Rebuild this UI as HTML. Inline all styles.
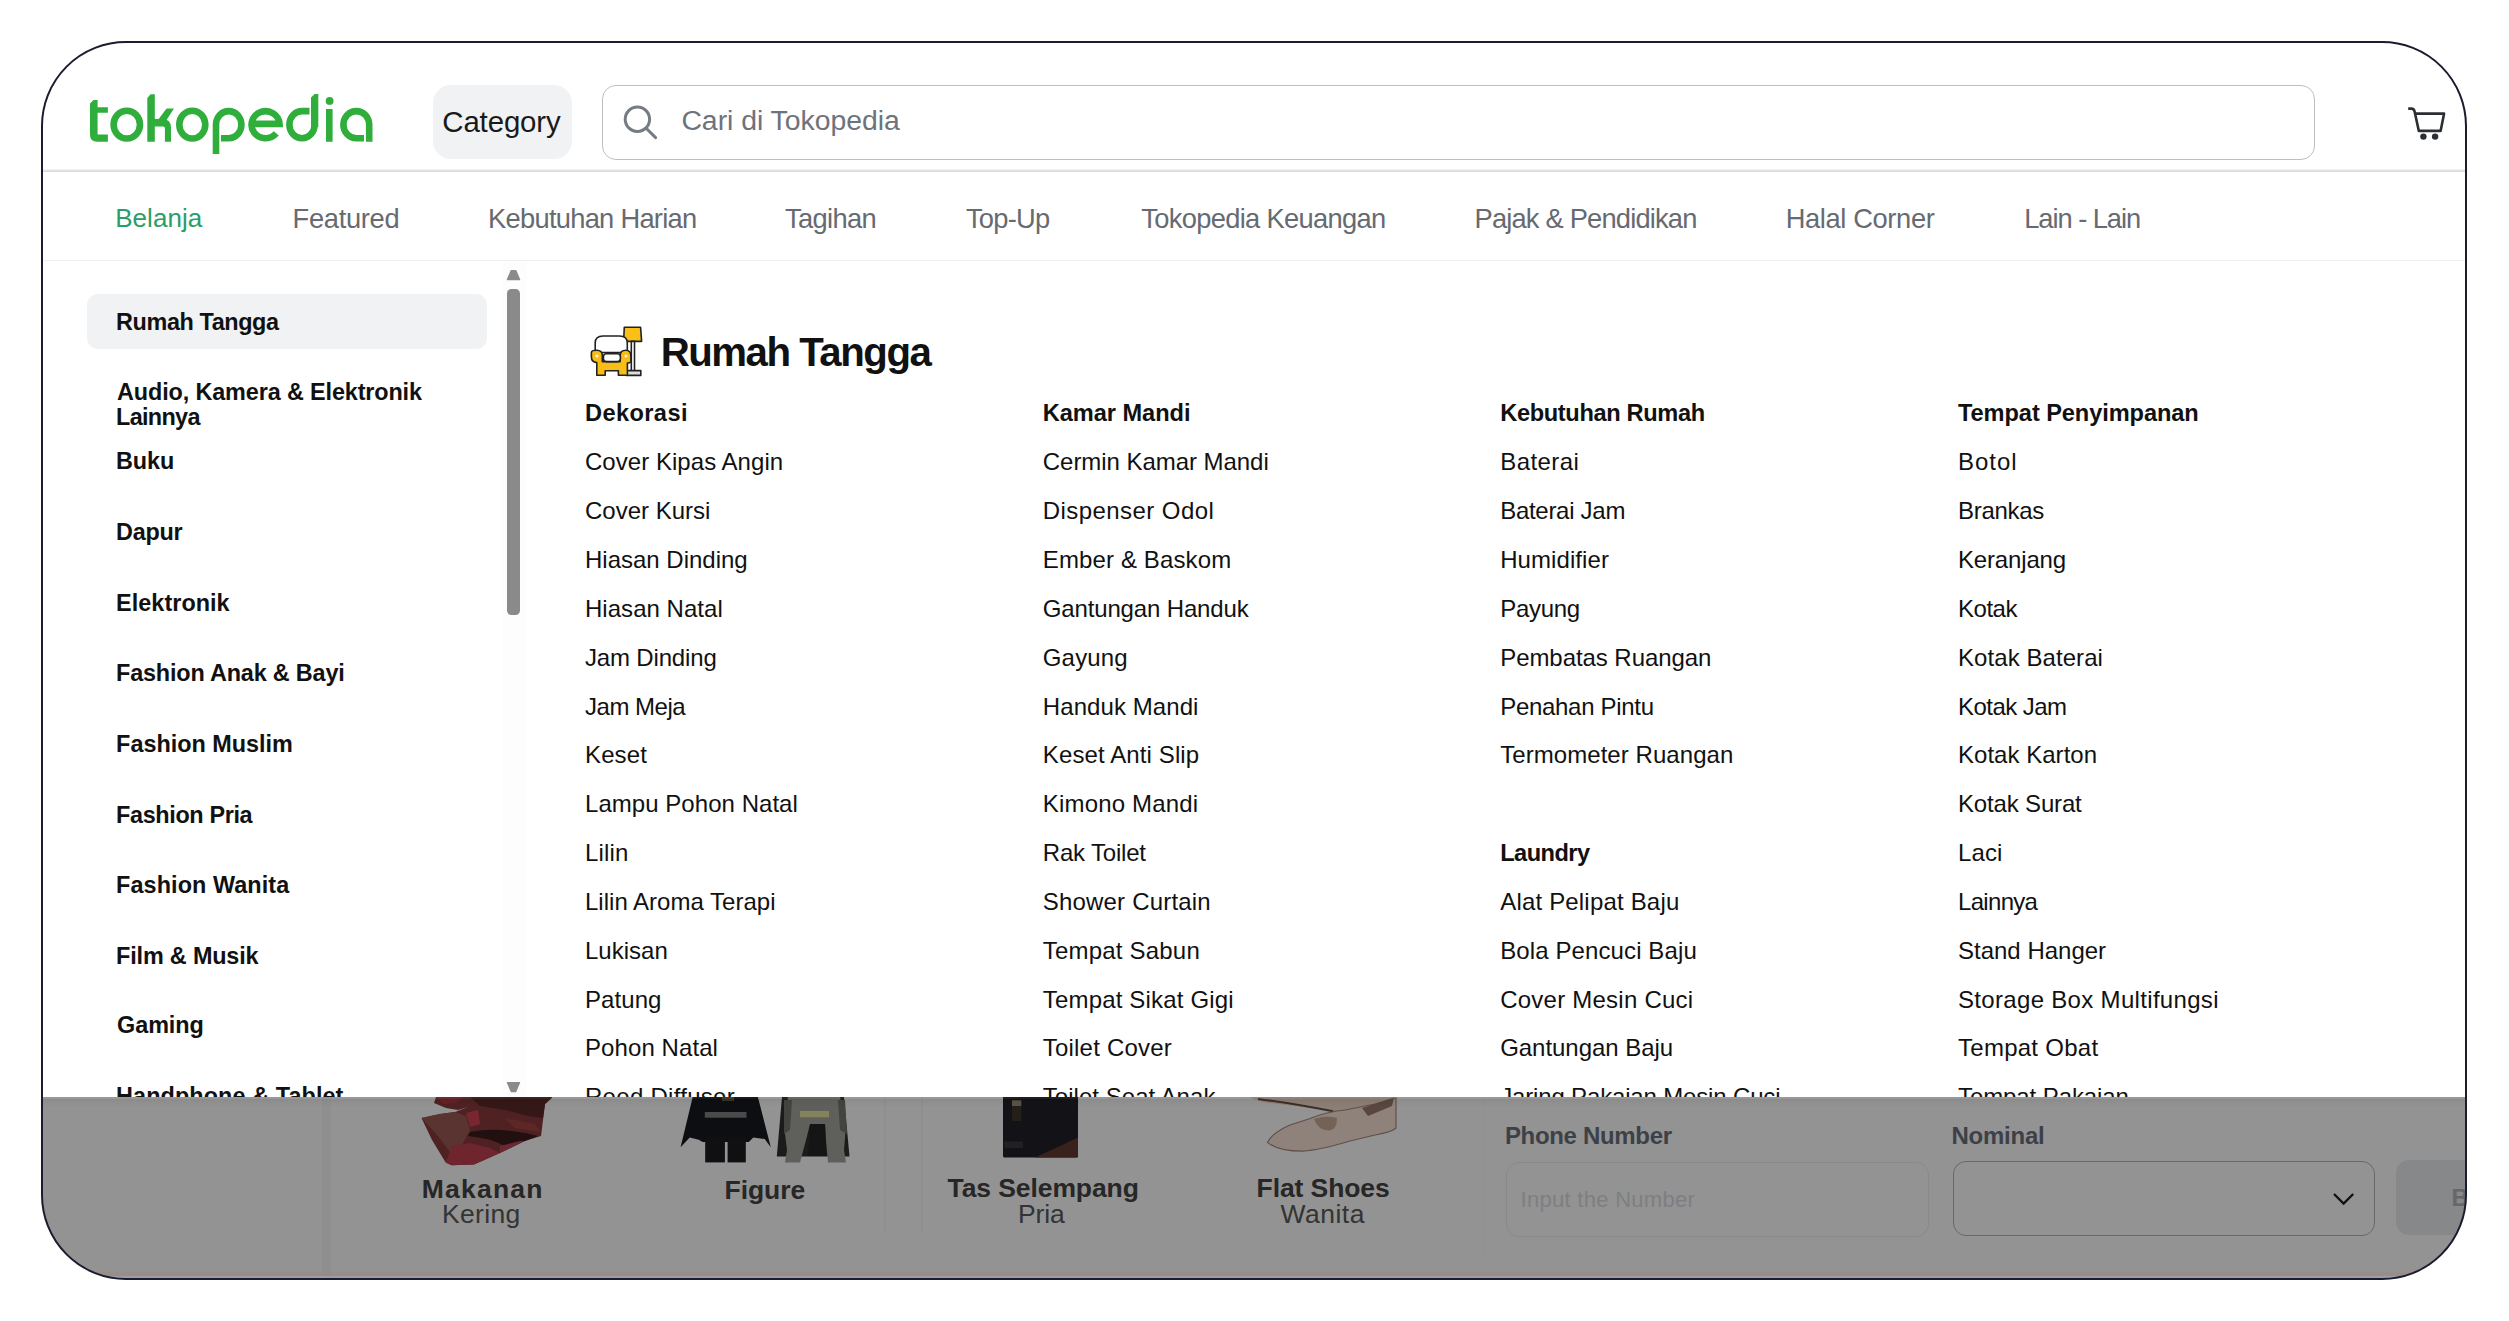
<!DOCTYPE html>
<html><head><meta charset="utf-8"><style>
html,body{margin:0;padding:0;background:#fff;}
body{width:2509px;height:1321px;overflow:hidden;position:relative;font-family:"Liberation Sans",sans-serif;}
.abs{position:absolute;}
.t{position:absolute;white-space:nowrap;font-family:"Liberation Sans",sans-serif;}
#clip{position:absolute;left:0;top:0;width:2509px;height:1321px;clip-path:inset(42px 43.5px 42.5px 42px round 83px);background:#fff;}
#frame{position:absolute;left:40.5px;top:40.5px;width:2426.5px;height:1239.5px;box-sizing:border-box;border:2.5px solid #1b1c2d;border-radius:85px;}
</style></head><body>
<div id="clip">
<svg class="abs" style="left:0;top:0" width="400" height="170" viewBox="0 0 400 170">
<g fill="#2fae3c">
<path d="M90,103.4 L93.6,100.1 H97.6 V107.2 H107.9 V112.7 H97.6 V134.6 H107.9 V141.7 H97.2 Q90,141.7 90,134.4 Z"/>
<path d="M147.3,97.9 L150.6,94.2 H154.8 V141.7 H147.3 Z"/>
<path d="M154,119.1 H163 Q171,119.6 171,127.5 V141.7 H164.9 V128.2 Q164.9,126.6 163.3,126.6 H154 Z"/>
<path d="M158.3,119.6 L166.6,108.6 H174 L165.4,121.8 Z"/>
<path d="M311,97.6 L314.6,94.1 H318.3 V127 H311 Z"/>
<circle cx="329.6" cy="100.9" r="3.9"/>
</g>
<g fill="none" stroke="#2fae3c" stroke-width="6.6" stroke-linecap="butt">
<ellipse cx="126.8" cy="124.6" rx="13.2" ry="13.9"/>
<ellipse cx="192.3" cy="124.6" rx="13.0" ry="13.9"/>
<path d="M216,154 V124.7 A12.7,13.6 0 1 1 228.8,138.3 H221"/>
<path d="M251.4,123.9 H279.55 A14.0,13.5 0 1 0 276.3,133.4"/>
<path d="M314.6,124.7 A12.6,13.6 0 1 1 302.1,111.1 H309.5"/>
<path d="M329.3,109 V141.7"/>
<path d="M364,138.3 H356.3 A12.9,13.6 0 1 1 369.2,124.7 V141.7"/>
</g>
</svg><div class="abs" style="left:433px;top:84.6px;width:138.5px;height:74px;border-radius:18px;background:#f0f2f4"></div><div class="t" style="left:442.30px;top:106.39px;font-size:29.4px;line-height:32.840px;font-weight:400;color:#1a1a1a;letter-spacing:-0.123px;">Category</div><div class="abs" style="left:601.5px;top:85px;width:1713px;height:74.5px;box-sizing:border-box;border:1.8px solid #bdbebf;border-radius:14px;background:#fff"></div><svg class="abs" style="left:615px;top:98px" width="50" height="50" viewBox="615 98 50 50">
<circle cx="637.4" cy="119.3" r="12.2" fill="none" stroke="#777b83" stroke-width="3"/>
<path d="M646.2,128.2 L655.6,137.6" stroke="#777b83" stroke-width="3" stroke-linecap="round"/>
</svg><div class="t" style="left:681.40px;top:104.60px;font-size:28.4px;line-height:31.723px;font-weight:400;color:#6e737b;letter-spacing:-0.023px;">Cari di Tokopedia</div><svg class="abs" style="left:2400px;top:100px" width="60" height="50" viewBox="2400 100 60 50">
<path d="M2408.2,108.6 H2411.5 Q2414,108.6 2414.6,111.5 L2418.8,130.9 H2440.6 L2444.1,113.6 H2415" fill="none" stroke="#2b2f34" stroke-width="2.6" stroke-linejoin="round"/>
<circle cx="2423.4" cy="136.6" r="3.2" fill="#2b2f34"/>
<circle cx="2435.1" cy="136.6" r="3.2" fill="#2b2f34"/>
</svg><div class="abs" style="left:0;top:169px;width:2509px;height:3px;background:linear-gradient(#f4f4f5,#d3d4d5)"></div><div class="t" style="left:115.20px;top:203.87px;font-size:26.0px;line-height:29.042px;font-weight:400;color:#2a9e68;letter-spacing:0.038px;">Belanja</div><div class="t" style="left:292.50px;top:204.19px;font-size:27.3px;line-height:30.494px;font-weight:400;color:#666a71;letter-spacing:-0.296px;">Featured</div><div class="t" style="left:488.10px;top:204.19px;font-size:27.3px;line-height:30.494px;font-weight:400;color:#666a71;letter-spacing:-0.732px;">Kebutuhan Harian</div><div class="t" style="left:785.10px;top:204.19px;font-size:27.3px;line-height:30.494px;font-weight:400;color:#666a71;letter-spacing:-0.673px;">Tagihan</div><div class="t" style="left:965.90px;top:204.19px;font-size:27.3px;line-height:30.494px;font-weight:400;color:#666a71;letter-spacing:-0.743px;">Top-Up</div><div class="t" style="left:1141.30px;top:204.19px;font-size:27.3px;line-height:30.494px;font-weight:400;color:#666a71;letter-spacing:-0.690px;">Tokopedia Keuangan</div><div class="t" style="left:1474.50px;top:204.19px;font-size:27.3px;line-height:30.494px;font-weight:400;color:#666a71;letter-spacing:-0.815px;">Pajak &amp; Pendidikan</div><div class="t" style="left:1785.70px;top:204.19px;font-size:27.3px;line-height:30.494px;font-weight:400;color:#666a71;letter-spacing:-0.376px;">Halal Corner</div><div class="t" style="left:2024.20px;top:204.19px;font-size:27.3px;line-height:30.494px;font-weight:400;color:#666a71;letter-spacing:-1.049px;">Lain - Lain</div><div class="abs" style="left:0;top:259.8px;width:2509px;height:1.6px;background:#eeeff0"></div><div class="abs" style="left:86.7px;top:294.2px;width:400.1px;height:54.4px;border-radius:11px;background:#f0f2f3"></div><div class="t" style="left:116.10px;top:308.82px;font-size:23.4px;line-height:26.138px;font-weight:700;color:#111;letter-spacing:-0.391px;">Rumah Tangga</div><div class="t" style="left:117.10px;top:378.52px;font-size:23.4px;line-height:26.138px;font-weight:700;color:#111;letter-spacing:-0.126px;">Audio, Kamera &amp; Elektronik</div><div class="t" style="left:116.10px;top:404.42px;font-size:23.4px;line-height:26.138px;font-weight:700;color:#111;letter-spacing:-0.680px;">Lainnya</div><div class="t" style="left:116.10px;top:447.82px;font-size:23.4px;line-height:26.138px;font-weight:700;color:#111;letter-spacing:-0.130px;">Buku</div><div class="t" style="left:116.10px;top:519.02px;font-size:23.4px;line-height:26.138px;font-weight:700;color:#111;letter-spacing:-0.294px;">Dapur</div><div class="t" style="left:116.10px;top:589.62px;font-size:23.4px;line-height:26.138px;font-weight:700;color:#111;letter-spacing:0.046px;">Elektronik</div><div class="t" style="left:116.10px;top:660.42px;font-size:23.4px;line-height:26.138px;font-weight:700;color:#111;letter-spacing:-0.176px;">Fashion Anak &amp; Bayi</div><div class="t" style="left:116.10px;top:730.72px;font-size:23.4px;line-height:26.138px;font-weight:700;color:#111;letter-spacing:-0.003px;">Fashion Muslim</div><div class="t" style="left:116.10px;top:801.52px;font-size:23.4px;line-height:26.138px;font-weight:700;color:#111;letter-spacing:-0.352px;">Fashion Pria</div><div class="t" style="left:116.10px;top:872.42px;font-size:23.4px;line-height:26.138px;font-weight:700;color:#111;letter-spacing:0.088px;">Fashion Wanita</div><div class="t" style="left:116.10px;top:942.72px;font-size:23.4px;line-height:26.138px;font-weight:700;color:#111;letter-spacing:-0.168px;">Film &amp; Musik</div><div class="t" style="left:117.10px;top:1012.32px;font-size:23.4px;line-height:26.138px;font-weight:700;color:#111;letter-spacing:-0.077px;">Gaming</div><div class="t" style="left:116.10px;top:1082.62px;font-size:23.4px;line-height:26.138px;font-weight:700;color:#111;letter-spacing:0.095px;">Handphone &amp; Tablet</div><div class="abs" style="left:503px;top:262px;width:24px;height:835px;background:#fdfdfd"></div><svg class="abs" style="left:500px;top:262px" width="30" height="840" viewBox="500 262 30 840"><path d="M511.2,270.6 H515.8 L519.6,279.6 H507.4 Z" fill="#8a8a8a" stroke="#8a8a8a" stroke-width="1.2" stroke-linejoin="round"/><path d="M507.4,1082.6 H519.6 L515.8,1091.6 H511.2 Z" fill="#8a8a8a" stroke="#8a8a8a" stroke-width="1.2" stroke-linejoin="round"/></svg><div class="abs" style="left:507px;top:289px;width:13px;height:325.6px;border-radius:4.5px;background:#8a8a8a"></div><svg class="abs" style="left:585px;top:322px" width="60" height="58" viewBox="585 322 60 58">
<g stroke="#222" stroke-width="1.6" stroke-linejoin="round">
<path d="M624.3,327.3 H640.6 L641.6,341.4 H623.6 Z" fill="#fbbf16"/>
<rect x="631.3" y="341.4" width="3.2" height="29.6" fill="#fff"/>
<rect x="626.2" y="370.6" width="14.6" height="4.8" fill="#ddd"/>
<path d="M595.2,352.5 V343 Q595.2,336 603,336 H619.5 Q627.3,336 627.3,343 V352.5 Z" fill="#fff"/>
<path d="M591.4,352.5 Q591.4,350.3 596.8,350.3 Q602.3,350.3 602.3,355.5 V361.6 H620.2 V355.5 Q620.2,350.3 625.8,350.3 Q630.9,350.3 630.9,356 V362 Q629.7,363 627.4,363 V375.3 H618.4 V370.7 H605.2 V375.3 H596.8 V362.6 Q591.4,362 591.4,357 Z" fill="#f9bd18"/>
<rect x="603.4" y="353.8" width="17" height="7.8" rx="3" fill="#fff"/>
</g>
<circle cx="597" cy="356" r="1.6" fill="#fff6c0"/><circle cx="626" cy="356" r="1.6" fill="#fff6c0"/>
</svg><div class="t" style="left:660.70px;top:330.62px;font-size:40.2px;line-height:44.903px;font-weight:700;color:#111;letter-spacing:-1.466px;">Rumah Tangga</div><div class="t" style="left:585.00px;top:399.64px;font-size:23.6px;line-height:26.361px;font-weight:700;color:#111;letter-spacing:0.397px;">Dekorasi</div><div class="t" style="left:585.00px;top:449.28px;font-size:24.0px;line-height:26.808px;font-weight:400;color:#111;letter-spacing:0.042px;">Cover Kipas Angin</div><div class="t" style="left:585.00px;top:498.13px;font-size:24.0px;line-height:26.808px;font-weight:400;color:#111;letter-spacing:-0.004px;">Cover Kursi</div><div class="t" style="left:585.00px;top:546.98px;font-size:24.0px;line-height:26.808px;font-weight:400;color:#111;letter-spacing:-0.009px;">Hiasan Dinding</div><div class="t" style="left:585.00px;top:595.83px;font-size:24.0px;line-height:26.808px;font-weight:400;color:#111;letter-spacing:0.030px;">Hiasan Natal</div><div class="t" style="left:585.00px;top:644.68px;font-size:24.0px;line-height:26.808px;font-weight:400;color:#111;letter-spacing:-0.165px;">Jam Dinding</div><div class="t" style="left:585.00px;top:693.53px;font-size:24.0px;line-height:26.808px;font-weight:400;color:#111;letter-spacing:-0.483px;">Jam Meja</div><div class="t" style="left:585.00px;top:742.38px;font-size:24.0px;line-height:26.808px;font-weight:400;color:#111;letter-spacing:0.124px;">Keset</div><div class="t" style="left:585.00px;top:791.23px;font-size:24.0px;line-height:26.808px;font-weight:400;color:#111;letter-spacing:0.043px;">Lampu Pohon Natal</div><div class="t" style="left:585.00px;top:840.08px;font-size:24.0px;line-height:26.808px;font-weight:400;color:#111;letter-spacing:0.139px;">Lilin</div><div class="t" style="left:585.00px;top:888.93px;font-size:24.0px;line-height:26.808px;font-weight:400;color:#111;letter-spacing:0.009px;">Lilin Aroma Terapi</div><div class="t" style="left:585.00px;top:937.78px;font-size:24.0px;line-height:26.808px;font-weight:400;color:#111;letter-spacing:0.004px;">Lukisan</div><div class="t" style="left:585.00px;top:986.63px;font-size:24.0px;line-height:26.808px;font-weight:400;color:#111;letter-spacing:0.076px;">Patung</div><div class="t" style="left:585.00px;top:1035.48px;font-size:24.0px;line-height:26.808px;font-weight:400;color:#111;letter-spacing:0.084px;">Pohon Natal</div><div class="t" style="left:585.00px;top:1084.33px;font-size:24.0px;line-height:26.808px;font-weight:400;color:#111;letter-spacing:0.283px;">Reed Diffuser</div><div class="t" style="left:1042.80px;top:399.64px;font-size:23.6px;line-height:26.361px;font-weight:700;color:#111;letter-spacing:-0.050px;">Kamar Mandi</div><div class="t" style="left:1042.80px;top:449.28px;font-size:24.0px;line-height:26.808px;font-weight:400;color:#111;letter-spacing:-0.047px;">Cermin Kamar Mandi</div><div class="t" style="left:1042.80px;top:498.13px;font-size:24.0px;line-height:26.808px;font-weight:400;color:#111;letter-spacing:0.432px;">Dispenser Odol</div><div class="t" style="left:1042.80px;top:546.98px;font-size:24.0px;line-height:26.808px;font-weight:400;color:#111;letter-spacing:0.128px;">Ember &amp; Baskom</div><div class="t" style="left:1042.80px;top:595.83px;font-size:24.0px;line-height:26.808px;font-weight:400;color:#111;letter-spacing:-0.151px;">Gantungan Handuk</div><div class="t" style="left:1042.80px;top:644.68px;font-size:24.0px;line-height:26.808px;font-weight:400;color:#111;letter-spacing:0.158px;">Gayung</div><div class="t" style="left:1042.80px;top:693.53px;font-size:24.0px;line-height:26.808px;font-weight:400;color:#111;letter-spacing:0.079px;">Handuk Mandi</div><div class="t" style="left:1042.80px;top:742.38px;font-size:24.0px;line-height:26.808px;font-weight:400;color:#111;letter-spacing:0.112px;">Keset Anti Slip</div><div class="t" style="left:1042.80px;top:791.23px;font-size:24.0px;line-height:26.808px;font-weight:400;color:#111;letter-spacing:0.166px;">Kimono Mandi</div><div class="t" style="left:1042.80px;top:840.08px;font-size:24.0px;line-height:26.808px;font-weight:400;color:#111;letter-spacing:-0.190px;">Rak Toilet</div><div class="t" style="left:1042.80px;top:888.93px;font-size:24.0px;line-height:26.808px;font-weight:400;color:#111;letter-spacing:0.188px;">Shower Curtain</div><div class="t" style="left:1042.80px;top:937.78px;font-size:24.0px;line-height:26.808px;font-weight:400;color:#111;letter-spacing:0.198px;">Tempat Sabun</div><div class="t" style="left:1042.80px;top:986.63px;font-size:24.0px;line-height:26.808px;font-weight:400;color:#111;letter-spacing:0.172px;">Tempat Sikat Gigi</div><div class="t" style="left:1042.80px;top:1035.48px;font-size:24.0px;line-height:26.808px;font-weight:400;color:#111;letter-spacing:0.198px;">Toilet Cover</div><div class="t" style="left:1042.80px;top:1084.33px;font-size:24.0px;line-height:26.808px;font-weight:400;color:#111;letter-spacing:0.031px;">Toilet Seat Anak</div><div class="t" style="left:1500.20px;top:399.64px;font-size:23.6px;line-height:26.361px;font-weight:700;color:#111;letter-spacing:-0.336px;">Kebutuhan Rumah</div><div class="t" style="left:1500.20px;top:449.28px;font-size:24.0px;line-height:26.808px;font-weight:400;color:#111;letter-spacing:0.432px;">Baterai</div><div class="t" style="left:1500.20px;top:498.13px;font-size:24.0px;line-height:26.808px;font-weight:400;color:#111;letter-spacing:-0.286px;">Baterai Jam</div><div class="t" style="left:1500.20px;top:546.98px;font-size:24.0px;line-height:26.808px;font-weight:400;color:#111;letter-spacing:0.074px;">Humidifier</div><div class="t" style="left:1500.20px;top:595.83px;font-size:24.0px;line-height:26.808px;font-weight:400;color:#111;letter-spacing:-0.290px;">Payung</div><div class="t" style="left:1500.20px;top:644.68px;font-size:24.0px;line-height:26.808px;font-weight:400;color:#111;letter-spacing:-0.060px;">Pembatas Ruangan</div><div class="t" style="left:1500.20px;top:693.53px;font-size:24.0px;line-height:26.808px;font-weight:400;color:#111;letter-spacing:-0.301px;">Penahan Pintu</div><div class="t" style="left:1500.20px;top:742.38px;font-size:24.0px;line-height:26.808px;font-weight:400;color:#111;letter-spacing:0.061px;">Termometer Ruangan</div><div class="t" style="left:1500.20px;top:840.44px;font-size:23.6px;line-height:26.361px;font-weight:700;color:#111;letter-spacing:-0.542px;">Laundry</div><div class="t" style="left:1500.20px;top:888.93px;font-size:24.0px;line-height:26.808px;font-weight:400;color:#111;letter-spacing:0.184px;">Alat Pelipat Baju</div><div class="t" style="left:1500.20px;top:937.78px;font-size:24.0px;line-height:26.808px;font-weight:400;color:#111;letter-spacing:0.110px;">Bola Pencuci Baju</div><div class="t" style="left:1500.20px;top:986.63px;font-size:24.0px;line-height:26.808px;font-weight:400;color:#111;letter-spacing:0.236px;">Cover Mesin Cuci</div><div class="t" style="left:1500.20px;top:1035.48px;font-size:24.0px;line-height:26.808px;font-weight:400;color:#111;letter-spacing:-0.040px;">Gantungan Baju</div><div class="t" style="left:1500.20px;top:1084.33px;font-size:24.0px;line-height:26.808px;font-weight:400;color:#111;letter-spacing:-0.158px;">Jaring Pakaian Mesin Cuci</div><div class="t" style="left:1958.00px;top:399.64px;font-size:23.6px;line-height:26.361px;font-weight:700;color:#111;letter-spacing:-0.082px;">Tempat Penyimpanan</div><div class="t" style="left:1958.00px;top:449.28px;font-size:24.0px;line-height:26.808px;font-weight:400;color:#111;letter-spacing:0.957px;">Botol</div><div class="t" style="left:1958.00px;top:498.13px;font-size:24.0px;line-height:26.808px;font-weight:400;color:#111;letter-spacing:-0.307px;">Brankas</div><div class="t" style="left:1958.00px;top:546.98px;font-size:24.0px;line-height:26.808px;font-weight:400;color:#111;letter-spacing:-0.159px;">Keranjang</div><div class="t" style="left:1958.00px;top:595.83px;font-size:24.0px;line-height:26.808px;font-weight:400;color:#111;letter-spacing:-0.468px;">Kotak</div><div class="t" style="left:1958.00px;top:644.68px;font-size:24.0px;line-height:26.808px;font-weight:400;color:#111;letter-spacing:0.071px;">Kotak Baterai</div><div class="t" style="left:1958.00px;top:693.53px;font-size:24.0px;line-height:26.808px;font-weight:400;color:#111;letter-spacing:-0.536px;">Kotak Jam</div><div class="t" style="left:1958.00px;top:742.38px;font-size:24.0px;line-height:26.808px;font-weight:400;color:#111;letter-spacing:0.027px;">Kotak Karton</div><div class="t" style="left:1958.00px;top:791.23px;font-size:24.0px;line-height:26.808px;font-weight:400;color:#111;letter-spacing:-0.163px;">Kotak Surat</div><div class="t" style="left:1958.00px;top:840.08px;font-size:24.0px;line-height:26.808px;font-weight:400;color:#111;letter-spacing:0.135px;">Laci</div><div class="t" style="left:1958.00px;top:888.93px;font-size:24.0px;line-height:26.808px;font-weight:400;color:#111;letter-spacing:-0.687px;">Lainnya</div><div class="t" style="left:1958.00px;top:937.78px;font-size:24.0px;line-height:26.808px;font-weight:400;color:#111;letter-spacing:-0.001px;">Stand Hanger</div><div class="t" style="left:1958.00px;top:986.63px;font-size:24.0px;line-height:26.808px;font-weight:400;color:#111;letter-spacing:0.321px;">Storage Box Multifungsi</div><div class="t" style="left:1958.00px;top:1035.48px;font-size:24.0px;line-height:26.808px;font-weight:400;color:#111;letter-spacing:0.267px;">Tempat Obat</div><div class="t" style="left:1958.00px;top:1084.33px;font-size:24.0px;line-height:26.808px;font-weight:400;color:#111;letter-spacing:-0.089px;">Tempat Pakaian</div>
<div class="abs" style="left:0;top:0;width:2509px;height:1321px;clip-path:inset(1097px 0 0 0)"><div class="abs" style="left:0;top:1097px;width:2509px;height:224px;background:#fff"></div><div class="abs" style="left:322px;top:1097px;width:9px;height:190px;background:#f9f9f9"></div><svg class="abs" style="left:400px;top:1090px" width="170" height="90" viewBox="400 1090 170 90">
<path d="M436,1097 H552 L551.6,1098.5 L545,1104 L543,1120 L541,1136 L524.8,1141 L500,1153 L474,1164.5 L451.5,1165.2 L445.7,1162.6 L432,1140 L421.5,1118 L440,1114 L455,1112 L468,1107 L458,1110 L446,1108 L434,1103 Z" fill="#8a3a3c"/>
<path d="M470,1097 H552 L545,1104 L543,1118 L528,1116 L505,1110 L480,1106 Z" fill="#5a2a28"/>
<path d="M436,1097 H462 L456,1103 L444,1104 Z" fill="#b03a45"/>
<path d="M421.5,1118 L440,1114 L455,1112 L466,1116 L470,1130 L462,1145 L450,1152 L438,1136 Z" fill="#9a5a56"/>
<path d="M470,1132 Q500,1126 538,1136 L524.8,1141 L505,1146 Q490,1138 468,1136 Z" fill="#3a1c1a"/>
<path d="M466,1113 L478,1110 L480,1124 L470,1127 Z" fill="#d04556"/>
<path d="M452,1146 L470,1143 L490,1148 L500,1153 L474,1164.5 L451.5,1165.2 L445.7,1162.6 Z" fill="#c04050"/>
<path d="M500,1146 L520,1141 L524.8,1141 L500,1153 Z" fill="#b84858"/>
<path d="M505,1118 L535,1124 L541,1132 L515,1128 Z" fill="#a0443f"/>
</svg><svg class="abs" style="left:670px;top:1090px" width="190" height="80" viewBox="670 1090 190 80">
<path d="M692.7,1097 H757.9 L770.8,1147.3 L764.7,1139 L753.3,1137.4 L748.8,1142 H702.6 L698.8,1139.7 L689.7,1137.4 L680.6,1147.3 Z" fill="#18191e"/>
<rect x="705.2" y="1137" width="19.7" height="25.4" fill="#1c1c20"/><rect x="727.6" y="1137" width="18.2" height="25.4" fill="#1c1c20"/>
<rect x="704.8" y="1112" width="41.7" height="5.7" fill="#808080"/>
<rect x="722" y="1097" width="12" height="4" fill="#5a5a40"/>
<path d="M782,1097 H844 L849.5,1156.4 H776.8 Z" fill="#303030"/>
<path d="M788,1097 H840 L846,1125 L844,1150 L846,1162.4 H828 L826,1140 L825,1124 H810 L806,1140 L800,1162.4 H785 L787,1150 L784,1125 Z" fill="#a6a69e"/>
<path d="M784,1100 L792,1100 L790,1130 L784,1134 Z" fill="#74746f"/><path d="M838,1100 L845,1100 L847,1134 L840,1130 Z" fill="#74746f"/>
<path d="M810,1124 H825 L826,1156 H808 Z" fill="#262626"/>
<rect x="800" y="1111" width="29" height="6.3" fill="#e6e49a"/>
</svg><svg class="abs" style="left:995px;top:1090px" width="95" height="75" viewBox="995 1090 95 75">
<rect x="1003" y="1096" width="75" height="61.5" rx="1.5" fill="#222228"/>
<path d="M1035,1157.5 Q1060,1146 1078,1137.4 V1156 Q1078,1157.5 1076,1157.5 Z" fill="#643b32"/>
<rect x="1012" y="1100.3" width="9.3" height="5.8" fill="#9c8e7c"/>
<rect x="1012" y="1106" width="9.3" height="15" fill="#3e3630"/>
<rect x="1004.3" y="1141.6" width="18.6" height="6.4" rx="1" fill="#3a3a3e"/>
</svg><svg class="abs" style="left:1235px;top:1090px" width="175" height="70" viewBox="1235 1090 175 70">
<path d="M1250,1097 H1396 V1100 L1360,1108 L1333,1111.5 Q1300,1106 1270,1103 Q1255,1101 1250,1097 Z" fill="#efdacb"/>
<path d="M1258,1099 Q1290,1103 1333,1111.3" fill="none" stroke="#6a4e45" stroke-width="2"/>
<path d="M1267.5,1142.4 Q1272,1133 1290,1125 L1309.5,1118.7 Q1325,1112 1345,1110 L1375,1104 L1396,1098 L1396,1128 Q1392,1132 1375,1135 L1350,1141 Q1320,1150 1302.7,1151.2 Q1278,1151 1267.5,1142.4 Z" fill="#f6e2d4" stroke="#a88a80" stroke-width="1.2"/>
<path d="M1314,1119 Q1318,1131 1330,1130.5 Q1337,1129 1337,1118 Q1325,1115 1314,1119 Z" fill="#c9ab98"/>
<path d="M1362,1108 L1394,1097.5 L1392,1106 L1368,1116 Z" fill="#9a7a6c"/>
</svg><div class="t" style="left:421.80px;top:1174.92px;font-size:26.5px;line-height:29.601px;font-weight:700;color:#444444;letter-spacing:1.198px;">Makanan</div><div class="t" style="left:442.00px;top:1200.02px;font-size:26.5px;line-height:29.601px;font-weight:400;color:#5a5a5a;letter-spacing:0.347px;">Kering</div><div class="t" style="left:724.50px;top:1176.02px;font-size:26.5px;line-height:29.601px;font-weight:700;color:#444444;letter-spacing:-0.047px;">Figure</div><div class="t" style="left:947.60px;top:1174.42px;font-size:26.5px;line-height:29.601px;font-weight:700;color:#444444;letter-spacing:-0.096px;">Tas Selempang</div><div class="t" style="left:1018.00px;top:1200.02px;font-size:26.5px;line-height:29.601px;font-weight:400;color:#5a5a5a;letter-spacing:-0.129px;">Pria</div><div class="t" style="left:1256.60px;top:1174.42px;font-size:26.5px;line-height:29.601px;font-weight:700;color:#444444;letter-spacing:-0.096px;">Flat Shoes</div><div class="t" style="left:1280.50px;top:1200.02px;font-size:26.5px;line-height:29.601px;font-weight:400;color:#5a5a5a;letter-spacing:0.489px;">Wanita</div><div class="abs" style="left:884px;top:1097px;width:1.5px;height:135px;background:#f8f8f8"></div><div class="abs" style="left:921px;top:1097px;width:1.5px;height:135px;background:#f8f8f8"></div><div class="abs" style="left:1482.5px;top:1097px;width:1.5px;height:160px;background:#f8f8f8"></div><div class="t" style="left:1504.90px;top:1123.28px;font-size:24.0px;line-height:26.808px;font-weight:700;color:#6a727c;letter-spacing:-0.322px;">Phone Number</div><div class="abs" style="left:1506px;top:1161.5px;width:423px;height:75px;box-sizing:border-box;border:1.6px solid #eceef0;border-radius:13px"></div><div class="t" style="left:1520.50px;top:1188.09px;font-size:22.0px;line-height:24.574px;font-weight:400;color:#d8dde3;letter-spacing:0.289px;">Input the Number</div><div class="t" style="left:1951.50px;top:1122.68px;font-size:24.0px;line-height:26.808px;font-weight:700;color:#6a727c;letter-spacing:-0.251px;">Nominal</div><div class="abs" style="left:1952.5px;top:1161.4px;width:422px;height:75px;box-sizing:border-box;border:1.8px solid #b2b6ba;border-radius:13px"></div><svg class="abs" style="left:2325px;top:1185px" width="40" height="30" viewBox="2325 1185 40 30"><path d="M2334,1194 L2343.6,1203.5 L2353.2,1194" fill="none" stroke="#202020" stroke-width="2.4"/></svg><div class="abs" style="left:2396px;top:1160.3px;width:200px;height:75px;border-radius:13px;background:#e8ecef"></div><div class="t" style="left:2451.50px;top:1185.28px;font-size:24px;line-height:26.808px;font-weight:700;color:#b0b4b8;letter-spacing:0.000px;">B</div><div class="abs" style="left:0;top:1097px;width:2509px;height:224px;background:rgba(0,0,0,0.423)"></div><div class="abs" style="left:0;top:1097px;width:2509px;height:2px;background:rgba(255,255,255,0.05)"></div><div class="abs" style="left:0;top:1099px;width:2509px;height:8px;background:linear-gradient(rgba(0,0,0,0.05),rgba(0,0,0,0))"></div><div class="abs" style="left:0;top:1271.5px;width:2509px;height:4px;background:rgba(160,138,125,0.45)"></div><div class="abs" style="left:0;top:1276px;width:2509px;height:2px;background:rgba(155,162,175,0.8)"></div></div>
</div>
<div id="frame"></div>
</body></html>
